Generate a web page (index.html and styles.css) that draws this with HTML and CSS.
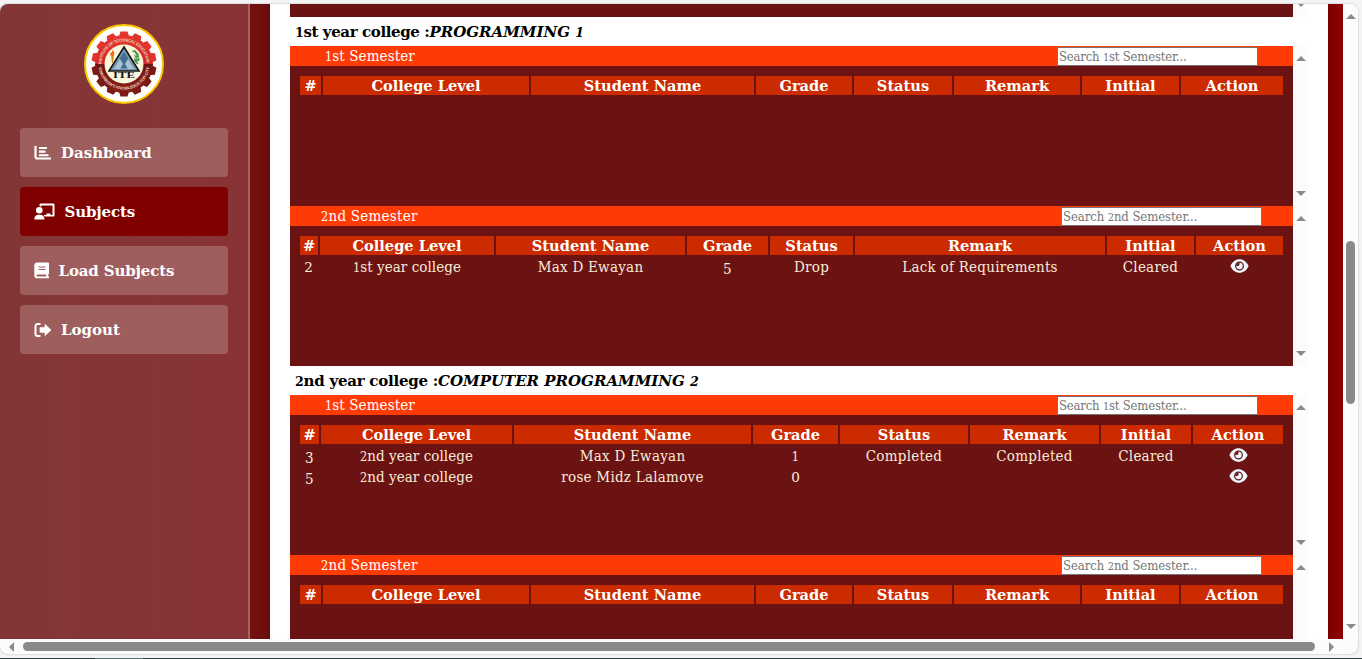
FILE: index.html
```html
<!DOCTYPE html>
<html lang="en">
<head>
<meta charset="utf-8">
<title>Subjects</title>
<link rel="stylesheet" href="styles.css">
</head>
<body>
<svg class="defs" width="0" height="0">
  <symbol id="eye" viewBox="0 0 576 512"><path fill="currentColor" d="M572.500 241.400C518.300 120 410.900 40 288 40S57.700 120 3.500 241.400a32.400 32.400 0 0 0 0 29.200C57.700 392 165.100 472 288 472s230.300-80 284.500-201.400a32.400 32.400 0 0 0 0-29.200z"/><circle cx="288" cy="256" r="122" fill="none" stroke="#6b1313" stroke-width="40"/><path fill="#6b1313" d="M288 150a106 106 0 0 0-106 106h40a60 60 0 0 0 66-66z"/></symbol>
</svg>
<div class="window">
  <div class="view">
    <aside class="sidebar">
      <div class="logo">
        <svg viewBox="0 0 80 80" width="80" height="80">
          <defs>
            <linearGradient id="gear" x1="0" y1="0" x2="0" y2="1"><stop offset="0" stop-color="#e8392f"/><stop offset=".5" stop-color="#cf2a22"/><stop offset=".5" stop-color="#6e1512"/><stop offset="1" stop-color="#8a2018"/></linearGradient>
            <path id="arcTop" d="M17.500 40A22.500 22.500 0 0 1 62.500 40"/>
            <path id="arcBottom" d="M14.400 43A25.800 25.800 0 0 0 65.600 43"/>
          </defs>
          <circle cx="40" cy="40" r="39" fill="#fff" stroke="#fcc800" stroke-width="2"/>
          <circle cx="40" cy="40" r="29" fill="url(#gear)"/>
          <path id="tooth" d="M35.500 10.500L36.500 7.500H43.500L44.500 10.500V13H35.500Z" fill="#e0352b"/>
          <use href="#tooth" transform="rotate(25.700 40 40)"/><use href="#tooth" transform="rotate(51.400 40 40)"/><use href="#tooth" transform="rotate(77.100 40 40)"/>
          <use href="#tooth" transform="rotate(-25.700 40 40)"/><use href="#tooth" transform="rotate(-51.400 40 40)"/><use href="#tooth" transform="rotate(-77.100 40 40)"/>
          <path id="toothLow" d="M35.500 69.500L36.500 72.500H43.500L44.500 69.500V67H35.500Z" fill="#7b1b15"/>
          <use href="#toothLow" transform="rotate(25.700 40 40)"/><use href="#toothLow" transform="rotate(51.400 40 40)"/><use href="#toothLow" transform="rotate(77.100 40 40)"/>
          <use href="#toothLow" transform="rotate(-25.700 40 40)"/><use href="#toothLow" transform="rotate(-51.400 40 40)"/><use href="#toothLow" transform="rotate(-77.100 40 40)"/>
          <circle cx="40" cy="40" r="19.500" fill="#fbf5da"/>
          <path d="M40 23L55 47H25Z" fill="#7398b5" stroke="#161616" stroke-width="1.600"/>
          <path d="M36 34l4-6 4 6v5h-2l4 5H34l4-5h-2z" fill="#456d91"/>
          <path d="M36 35l-6 10h6l3-5zM44 35l6 10h-6l-3-5z" fill="#abc3cf"/>
          <path d="M27 31h3l-1 8h-1z" fill="#d58a22"/><path d="M26 31c0-3 3-2 2-5 3 2 3 4 1 6z" fill="#f36a17"/>
          <path d="M48 27l3 1 3 5-3-1 4 5-4-2 3 5-4-4M50 26l4 4 1 6" fill="none" stroke="#4b9650" stroke-width="1.200"/>
          <text class="seal-name" x="29" y="53.800" textLength="22" lengthAdjust="spacingAndGlyphs">ITE</text>
          <text class="seal-ring"><textPath href="#arcTop" textLength="69">INSTITUTE OF TECHNICAL EDUCATION</textPath></text>
          <text class="seal-ring"><textPath href="#arcBottom" textLength="74">TOMORROW'S KNOWLEDGE FOR CITY</textPath></text>
        </svg>
      </div>
      <nav class="menu">
        <a class="item"><svg class="ico" width="18" height="16" viewBox="0 0 18 16"><path d="M1.500 1v10.500a2 2 0 0 0 2 2H17" fill="none" stroke="#fff" stroke-width="2.200"/><path d="M5 3h8M5 6.600h6.500M5 10.200h9.500" stroke="#fff" stroke-width="2.100"/></svg><span class="label l1">Dashboard</span></a>
        <a class="item active"><svg class="ico" width="21" height="17" viewBox="0 0 21 17"><path d="M5.500 3.200V1.600a1 1 0 0 1 1-1h13a1 1 0 0 1 1 1v11a1 1 0 0 1-1 1h-9l-1-1.500h3v-1.500h4v1.500h2V2.600h-11v1z" fill="#fff"/><circle cx="5.300" cy="7.300" r="3.300" fill="#fff"/><path d="M.3 16.500c0-3 1.700-4.700 4-4.700h2c2.300 0 4.200 1.700 4.200 4.700z" fill="#fff"/></svg><span class="label l2">Subjects</span></a>
        <a class="item"><svg class="ico" width="15" height="17" viewBox="0 0 15 17"><path fill="#fff" fill-rule="evenodd" d="M3.300.5H14a1 1 0 0 1 1 1v10a1 1 0 0 1-.8 1v1.900h.8v1.900H3.300A3 3 0 0 1 .3 13.400V3.500a3 3 0 0 1 3-3zM4.500 4.500v1h7v-1zM4.500 7v1h7V7zM3.500 12.500a.9.900 0 0 0 0 1.900h8.700v-1.900z"/></svg><span class="label l3">Load Subjects</span></a>
        <a class="item"><svg class="ico" width="18" height="16" viewBox="0 0 18 16"><path d="M6.500 2H3.500a2 2 0 0 0-2 2v8a2 2 0 0 0 2 2h3" fill="none" stroke="#fff" stroke-width="2"/><path d="M11 2.500l6 5.500-6 5.500V10.300H6V5.700h5z" fill="#fff" stroke="#fff" stroke-linejoin="round" stroke-width=".8"/></svg><span class="label l4">Logout</span></a>
      </nav>
    </aside>
    <div class="edge"></div>
    <main class="main">
      <div class="panel tail"><div class="body"></div><div class="track"><i class="down"></i></div></div>

      <h4 class="title"><span class="level"><span class="n">1</span>st year college :</span><em>PROGRAMMING <span class="n">1</span></em></h4>
      <section class="panel">
        <div class="body">
          <div class="bar first"><span class="sem"><span class="n">1</span>st Semester</span><div class="search">Search <span class="n">1</span>st Semester...</div></div>
          <div class="table ta"><b>#</b><b>College Level</b><b>Student Name</b><b>Grade</b><b>Status</b><b>Remark</b><b>Initial</b><b>Action</b></div>
        </div>
        <div class="track"><i class="up"></i><i class="down"></i></div>
      </section>
      <section class="panel">
        <div class="body">
          <div class="bar second"><span class="sem"><span class="n">2</span>nd Semester</span><div class="search">Search <span class="n">2</span>nd Semester...</div></div>
          <div class="table tb"><b>#</b><b>College Level</b><b>Student Name</b><b>Grade</b><b>Status</b><b>Remark</b><b>Initial</b><b>Action</b>
            <span><span class="n wide">2</span></span><span class="lvl"><span class="n">1</span>st year college</span><span>Max D Ewayan</span><span><span class="d">5</span></span><span>Drop</span><span>Lack of Requirements</span><span>Cleared</span><span><svg class="eye"><use href="#eye"/></svg></span></div>
        </div>
        <div class="track"><i class="up"></i><i class="down"></i></div>
      </section>

      <h4 class="title"><span class="level second-year"><span class="n">2</span>nd year college :</span><em>COMPUTER PROGRAMMING <span class="n">2</span></em></h4>
      <section class="panel">
        <div class="body">
          <div class="bar first"><span class="sem"><span class="n">1</span>st Semester</span><div class="search">Search <span class="n">1</span>st Semester...</div></div>
          <div class="table tc"><b>#</b><b>College Level</b><b>Student Name</b><b>Grade</b><b>Status</b><b>Remark</b><b>Initial</b><b>Action</b>
            <span><span class="d">3</span></span><span class="lvl"><span class="n">2</span>nd year college</span><span>Max D Ewayan</span><span><span class="n">1</span></span><span>Completed</span><span>Completed</span><span>Cleared</span><span><svg class="eye"><use href="#eye"/></svg></span>
            <span><span class="d">5</span></span><span class="lvl"><span class="n">2</span>nd year college</span><span>rose Midz Lalamove</span><span><span class="n wide">0</span></span><span></span><span></span><span></span><span><svg class="eye"><use href="#eye"/></svg></span></div>
        </div>
        <div class="track"><i class="up"></i><i class="down"></i></div>
      </section>
      <section class="panel">
        <div class="body">
          <div class="bar second"><span class="sem"><span class="n">2</span>nd Semester</span><div class="search">Search <span class="n">2</span>nd Semester...</div></div>
          <div class="table ta"><b>#</b><b>College Level</b><b>Student Name</b><b>Grade</b><b>Status</b><b>Remark</b><b>Initial</b><b>Action</b></div>
        </div>
        <div class="track"><i class="up"></i><i class="down"></i></div>
      </section>
    </main>
    <div class="redge"></div>
    <div class="vscroll"><i class="up"></i><div class="vthumb"></div><i class="down"></i></div>
  </div>
  <div class="hscroll"><i class="left"></i><div class="hthumb"></div><i class="right"></i></div>
</div>
<div class="taskline"><i></i></div>
</body>
</html>
```
FILE: styles.css
```css
* { box-sizing: border-box; }
body {
  margin: 0; height: 659px; overflow: hidden; background: #f4f4f4;
  display: flex; flex-direction: column; padding-top: 4px;
  font-family: Georgia, "DejaVu Serif Condensed", "DejaVu Serif", serif;
  font-stretch: condensed; font-size: 15px;
}
.defs { position: absolute; }
.window { width: 1358px; height: 650px; border-radius: 8px; overflow: hidden; background: #fcfcfc; box-shadow: 0 0 2px #aaa; flex: none; }
.view { display: flex; height: 635px; overflow: hidden; }
.sidebar { width: 250px; border-right: 2px solid #a46161; background: linear-gradient(90deg, #833636, #883336); padding: 20px 20px 0; }
.logo { display: flex; justify-content: center; height: 104px; }
.seal-name { font: bold 7.500px "Liberation Serif", serif; fill: #151515; }
.seal-ring { font: bold 4.200px "Liberation Sans", sans-serif; fill: #e8c8bc; }
.menu { display: flex; flex-direction: column; gap: 10px; }
.item { height: 49px; border-radius: 4px; background: #9e5e5e; display: flex; align-items: center; padding-left: 14px; color: #fff; }
.item, .title, .table b { font-family: Georgia, "DejaVu Serif", serif; font-stretch: normal; font-weight: bold; }
.item.active { background: #800000; }
.label { margin-left: 9px; white-space: nowrap; }
.l2, .l3 { letter-spacing: -.15px; margin-left: 9.5px; }
.edge { width: 20px; background: linear-gradient(90deg, #751010, #6f0e0e 70%, #600c0c); }
.main { width: 1058px; background: #fff; padding-left: 20px; }
.redge { width: 15px; background: linear-gradient(90deg, #7b0000, #8b0000 60%); }
.panel { display: flex; height: 160px; width: 1018px; }
.panel.tail { height: 13px; }
.body { width: 1003px; background: #6b1313; }
.track { width: 15px; background: #fcfcfc; display: flex; flex-direction: column; justify-content: space-between; align-items: center; padding: 10px 0 10px; }
.tail .track { padding: 0; justify-content: flex-start; }
.tail .down { border-top-width: 3px; border-left-width: 3px; border-right-width: 3px; }
.up, .down { width: 0; height: 0; border: 5px solid transparent; border-top: 0; border-bottom: 5px solid #8a8a8a; }
.down { border: 5px solid transparent; border-bottom: 0; border-top: 5px solid #8a8a8a; }
.title { margin: 0; height: 29px; line-height: 30px; padding-left: 5px; color: #000; white-space: nowrap; font-size: 15px; }
.level { letter-spacing: -.38px; }
.second-year { letter-spacing: -.24px; }
.n { font-size: .84em; }
.wide { display: inline-block; transform: scaleX(1.2); }
.d { display: inline-block; font-size: 1em; transform: translateY(2px); }
.bar { height: 20px; background: #ff3b05; display: flex; justify-content: space-between; align-items: center; color: #fff; line-height: 20px; white-space: nowrap; }
.sem { letter-spacing: .1px; }
.second .sem { letter-spacing: .25px; }
.first { padding: 0 35px; }
.second { padding: 0 31px; }
.search { width: 201px; height: 19px; margin-top: 1px; border: 1px solid #767676; background: #fff; color: #757575; font-size: 13px; line-height: 17px; padding-left: 1px; letter-spacing: -.2px; }
.second .search { letter-spacing: -.08px; }
.table { display: grid; gap: 2px; padding: 10px; grid-auto-rows: 19px; color: #faebd7; text-align: center; line-height: 20px; white-space: nowrap; letter-spacing: .25px; }
.table .lvl { letter-spacing: .05px; }
.table b { background: #cc2a00; color: #fff; font-size: 14.6px; letter-spacing: 0; }
.ta { grid-template-columns: 21px 206px 223px 96px 98px 126px 97px 102px; }
.tb { grid-template-columns: 18px 174px 189px 81px 83px 250px 87px 87px; }
.tc { grid-template-columns: 19px 191px 237px 85px 128px 129px 90px 90px; }
.eye { width: 19px; height: 16px; color: #f0f8ff; display: block; margin: 1px auto 0; }
.vscroll { width: 15px; background: #fcfcfc; display: flex; flex-direction: column; align-items: center; padding: 10px 0; }
.vthumb { width: 9px; height: 163px; margin: 222px 0 auto; border-radius: 5px; background: #8a8a8a; }
.hscroll { height: 15px; display: flex; align-items: center; padding-left: 9px; }
.left { border: 5px solid transparent; border-left: 0; border-right: 5px solid #8a8a8a; }
.right { border: 5px solid transparent; border-right: 0; border-left: 5px solid #8a8a8a; margin-left: 14px; }
.hthumb { width: 1292px; height: 9px; margin-left: 9px; border-radius: 5px; background: #8a8a8a; }
.taskline { margin-top: 4px; height: 1px; background: #263c40; padding-left: 95px; flex: none; }
.taskline i { display: block; width: 48px; height: 1px; background: #53706d; }
```
